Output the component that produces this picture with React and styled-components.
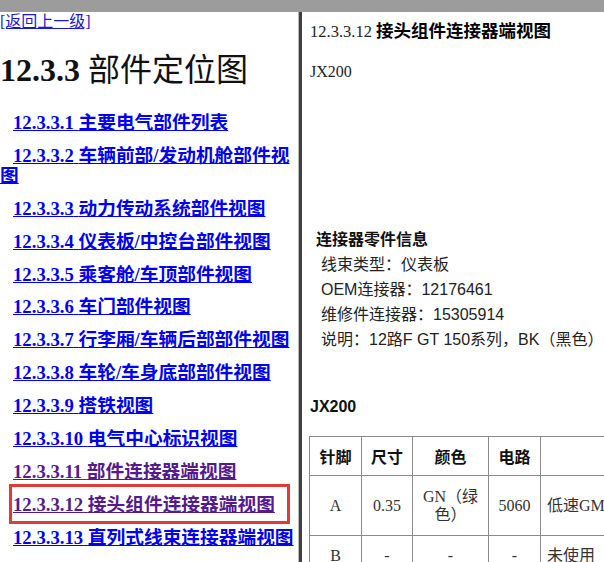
import React from "react";
import styled, { createGlobalStyle } from "styled-components";

const SERIF = `"Liberation Serif", "Noto Sans CJK SC", serif`;
const SANS = `"Liberation Sans", "Noto Sans CJK SC", sans-serif`;

const GlobalStyle = createGlobalStyle`
  html, body {
    margin: 0;
    padding: 0;
    background: #fff;
    overflow: hidden;
  }
`;

const entries = [
  { num: "12.3.3.1", title: "主要电气部件列表" },
  { num: "12.3.3.2", title: "车辆前部/发动机舱部件视图" },
  { num: "12.3.3.3", title: "动力传动系统部件视图" },
  { num: "12.3.3.4", title: "仪表板/中控台部件视图" },
  { num: "12.3.3.5", title: "乘客舱/车顶部件视图" },
  { num: "12.3.3.6", title: "车门部件视图" },
  { num: "12.3.3.7", title: "行李厢/车辆后部部件视图" },
  { num: "12.3.3.8", title: "车轮/车身底部部件视图" },
  { num: "12.3.3.9", title: "搭铁视图" },
  { num: "12.3.3.10", title: "电气中心标识视图" },
  { num: "12.3.3.11", title: "部件连接器端视图", visited: true },
  { num: "12.3.3.12", title: "接头组件连接器端视图", visited: true, marked: true },
  { num: "12.3.3.13", title: "直列式线束连接器端视图" },
];

const info = [
  "线束类型：仪表板",
  "OEM连接器：12176461",
  "维修件连接器：15305914",
  "说明：12路F GT 150系列，BK（黑色）",
];

const pins = [
  { pin: "A", size: "0.35", color: "GN（绿色）", circuit: "5060", fn: "低速GMLAN串行数据" },
  { pin: "B", size: "-", color: "-", circuit: "-", fn: "未使用" },
];

const App = () => {
  return (
    <Page>
      <GlobalStyle />
      <TopBar />
      <Frames>
        <LeftPane>
          <BackLink href="#">[返回上一级]</BackLink>
          <PageTitle>
            12.3.3 <TitleCjk>部件定位图</TitleCjk>
          </PageTitle>
          <EntryList>
            {entries.map((e) => (
              <Entry key={e.num} $marked={e.marked}>
                <EntryLink href="#" $visited={e.visited}>
                  {e.num} {e.title}
                </EntryLink>
              </Entry>
            ))}
          </EntryList>
        </LeftPane>
        <Divider />
        <RightPane>
          <DocTitle>
            12.3.3.12 <DocTitleCjk>接头组件连接器端视图</DocTitleCjk>
          </DocTitle>
          <Code>JX200</Code>
          <Figure>
            <svg width="302" height="145" viewBox="0 0 302 145">
              <path d="M299 50 L297 54" stroke="#555" strokeWidth="1.2" fill="none" />
              <circle cx="312" cy="77" r="11" stroke="#999" strokeWidth="1.5" fill="none" />
            </svg>
          </Figure>
          <InfoBlock>
            <InfoHeading>连接器零件信息</InfoHeading>
            {info.map((line) => (
              <InfoLine key={line}>{line}</InfoLine>
            ))}
          </InfoBlock>
          <TableCaption>JX200</TableCaption>
          <PinTable>
            <colgroup>
              <col style={{ width: 52 }} />
              <col style={{ width: 51 }} />
              <col style={{ width: 76 }} />
              <col style={{ width: 52 }} />
              <col style={{ width: 200 }} />
            </colgroup>
            <thead>
              <tr>
                <HeadCell>针脚</HeadCell>
                <HeadCell>尺寸</HeadCell>
                <HeadCell>颜色</HeadCell>
                <HeadCell>电路</HeadCell>
                <HeadCell />
              </tr>
            </thead>
            <tbody>
              {pins.map((p) => (
                <PinRow key={p.pin} $tall={p.pin === "A"}>
                  <Cell>{p.pin}</Cell>
                  <Cell>{p.size}</Cell>
                  <Cell>{p.color}</Cell>
                  <Cell>{p.circuit}</Cell>
                  <Cell $left>{p.fn}</Cell>
                </PinRow>
              ))}
            </tbody>
          </PinTable>
        </RightPane>
      </Frames>
    </Page>
  );
};

export default App;

// Styles
const Page = styled.div`
  width: 604px;
  height: 562px;
  overflow: hidden;
  background: #fff;
`;

const TopBar = styled.div`
  height: 12px;
  background: #9c9c9c;
`;

const Frames = styled.div`
  display: flex;
  height: 550px;
`;

const LeftPane = styled.div`
  width: 298px;
  flex: none;
  overflow: hidden;
  font-family: ${SERIF};
`;

const Divider = styled.div`
  width: 3px;
  flex: none;
  border-left: 1px solid #b8b8b8;
  background: #404040;
`;

const RightPane = styled.div`
  flex: 1;
  min-width: 0;
  overflow: hidden;
  padding-left: 8px;
  color: #222;
`;

const BackLink = styled.a`
  display: inline-block;
  font-size: 16px;
  line-height: 20px;
  color: #1a1acc;
  text-decoration: underline;
`;

const PageTitle = styled.h1`
  margin: 19px 0 0;
  font-size: 32px;
  line-height: 38px;
  font-weight: 700;
  color: #111;
`;

const TitleCjk = styled.span`
  font-weight: 400;
`;

const EntryList = styled.div`
  display: flex;
  flex-direction: column;
  gap: 12.9px;
  margin-top: 24px;
`;

const Entry = styled.div`
  position: relative;
  text-indent: 13px;
  font-size: 18.72px;
  line-height: 20px;
  font-weight: 700;

  &::after {
    content: "";
    display: ${(p) => (p.$marked ? "block" : "none")};
    position: absolute;
    top: -11px;
    bottom: -9px;
    left: 9px;
    right: 8px;
    border: 3px solid #e03a3a;
  }
`;

const EntryLink = styled.a`
  color: ${(p) => (p.$visited ? "#551a8b" : "#0000ee")};
  text-decoration: underline;
`;

const DocTitle = styled.div`
  margin-top: 9px;
  font-family: ${SERIF};
  font-size: 16.5px;
  line-height: 20px;
  color: #222;
  white-space: nowrap;
`;

const DocTitleCjk = styled.span`
  font-family: ${SANS};
  font-size: 17.5px;
  font-weight: 700;
  color: #000;
`;

const Code = styled.div`
  margin-top: 20px;
  font-family: ${SERIF};
  font-size: 16px;
  line-height: 20px;
`;

const Figure = styled.div`
  height: 145px;

  svg {
    display: block;
  }
`;

const InfoBlock = styled.div`
  margin-left: 6px;
  font-family: ${SANS};
  font-size: 16px;
  white-space: nowrap;
`;

const InfoHeading = styled.div`
  font-weight: 700;
  line-height: 25px;
  color: #111;
`;

const InfoLine = styled.div`
  padding-left: 5px;
  line-height: 25px;
  color: #222;
`;

const TableCaption = styled.div`
  margin-top: 45px;
  font-family: ${SANS};
  font-size: 16px;
  font-weight: 700;
  line-height: 20px;
  color: #111;
`;

const PinTable = styled.table`
  margin: 19px 0 0 -1px;
  border-collapse: collapse;
  table-layout: fixed;
  width: 431px;
`;

const HeadCell = styled.th`
  height: 38px;
  padding: 0 6px;
  border: 1px solid #8a8a8a;
  font-family: ${SANS};
  font-size: 16px;
  font-weight: 700;
  color: #111;
  text-align: center;
  vertical-align: middle;
`;

const PinRow = styled.tr`
  height: ${(p) => (p.$tall ? "60px" : "40px")};
`;

const Cell = styled.td`
  padding: 0 6px;
  border: 1px solid #8a8a8a;
  font-family: ${SERIF};
  font-size: 16px;
  line-height: 18px;
  color: #333;
  text-align: ${(p) => (p.$left ? "left" : "center")};
  vertical-align: middle;
  white-space: ${(p) => (p.$left ? "nowrap" : "normal")};
`;
